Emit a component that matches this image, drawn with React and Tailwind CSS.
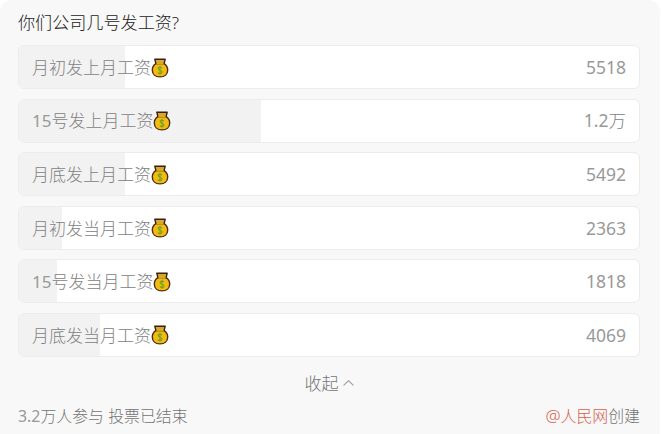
import { useState } from 'react';

const options = [
  { id: 1, label: '月初发上月工资', count: '5518', width: 106 },
  { id: 2, label: '15号发上月工资', count: '1.2万', width: 242 },
  { id: 3, label: '月底发上月工资', count: '5492', width: 106 },
  { id: 4, label: '月初发当月工资', count: '2363', width: 43 },
  { id: 5, label: '15号发当月工资', count: '1818', width: 38 },
  { id: 6, label: '月底发当月工资', count: '4069', width: 81 },
];

// 数字用常规字重，汉字用细体
function MixedText({ text }) {
  const [, digits, rest] = text.match(/^([\d.]*)(.*)$/);
  return (
    <span>
      {digits && <span className="font-normal text-[#999]">{digits}</span>}
      {rest}
    </span>
  );
}

// 钱袋图标
function MoneyBag() {
  return (
    <svg className="h-5 w-[18px] shrink-0" viewBox="0 0 18 20" fill="none">
      <path d="M5 5.6C2.6 7 1.3 9.3 1.3 11.9c0 4.2 3 7 7.7 7s7.7-2.8 7.7-7c0-2.6-1.3-4.9-3.7-6.3z" fill="#f2bb14" stroke="#4f2d10" strokeWidth="1.4" />
      <path d="M3.8 1.2h10.4l-1.1 4.4H4.9z" fill="#dba728" stroke="#35220d" strokeWidth="1.4" strokeLinejoin="round" />
      <path d="M5.4 5.8h7.2" stroke="#dba728" strokeWidth="1.6" />
      <path d="M10.8 10.2c-.3-.8-1-1.1-1.8-1.1-1.1 0-1.8.6-1.8 1.5 0 2.2 3.7 1.1 3.7 3.4 0 1-.8 1.6-1.9 1.6-.9 0-1.6-.4-2-1.2M9 7.7v9.1" stroke="#78a31c" strokeWidth="1.2" />
    </svg>
  );
}

function VoteOption({ option }) {
  return (
    <li className="relative flex h-11 items-center justify-between overflow-hidden rounded-md border border-[#ececec] bg-white px-[13px] text-[17px] text-[#828282]">
      <div className="absolute inset-y-0 left-0 bg-[#f2f2f2]" style={{ width: option.width }} />
      <span className="relative flex items-center pt-px whitespace-nowrap">
        <MixedText text={option.label} />
        <MoneyBag />
      </span>
      <span className="relative text-[17.5px]"><MixedText text={option.count} /></span>
    </li>
  );
}

function App() {
  const [expanded, setExpanded] = useState(true);
  const list = expanded ? options : options.slice(0, 3);

  return (
    <div className="h-[434px] bg-white font-['Noto_Sans','Noto_Sans_CJK_SC',sans-serif] font-light">
      <div className="flex h-full w-[660px] flex-col rounded-t-xl bg-[#f8f8f8] pt-2.5 pr-5 pl-[18px]">
        <h1 className="h-[35px] text-[17.1px] leading-[25px] font-light text-[#222]">你们公司几号发工资?</h1>

        <ul className="flex flex-col gap-[9.6px]">
          {list.map(option => <VoteOption key={option.id} option={option} />)}
        </ul>

        {/* 展开 / 收起 */}
        <button className="mt-[15px] flex h-6 items-center justify-center gap-1 text-[17.1px] text-[#747474]" onClick={() => setExpanded(!expanded)}>
          {expanded ? '收起' : '展开'}
          <svg className={expanded ? 'mb-0.5 h-1.5 w-[11px]' : 'mb-0.5 h-1.5 w-[11px] rotate-180'} viewBox="0 0 11 6" fill="none" stroke="#999" strokeWidth="1.1">
            <path d="M.6 5.4 5.5.7l4.9 4.7" />
          </svg>
        </button>

        <div className="mt-2 flex items-center justify-between text-[15.9px] leading-6 text-[#747474]">
          <MixedText text="3.2万人参与 投票已结束" />
          <span><span className="text-[#d6604a]"><span className="text-[17px]">@</span>人民网</span>创建</span>
        </div>
      </div>
    </div>
  );
}

export default App;
